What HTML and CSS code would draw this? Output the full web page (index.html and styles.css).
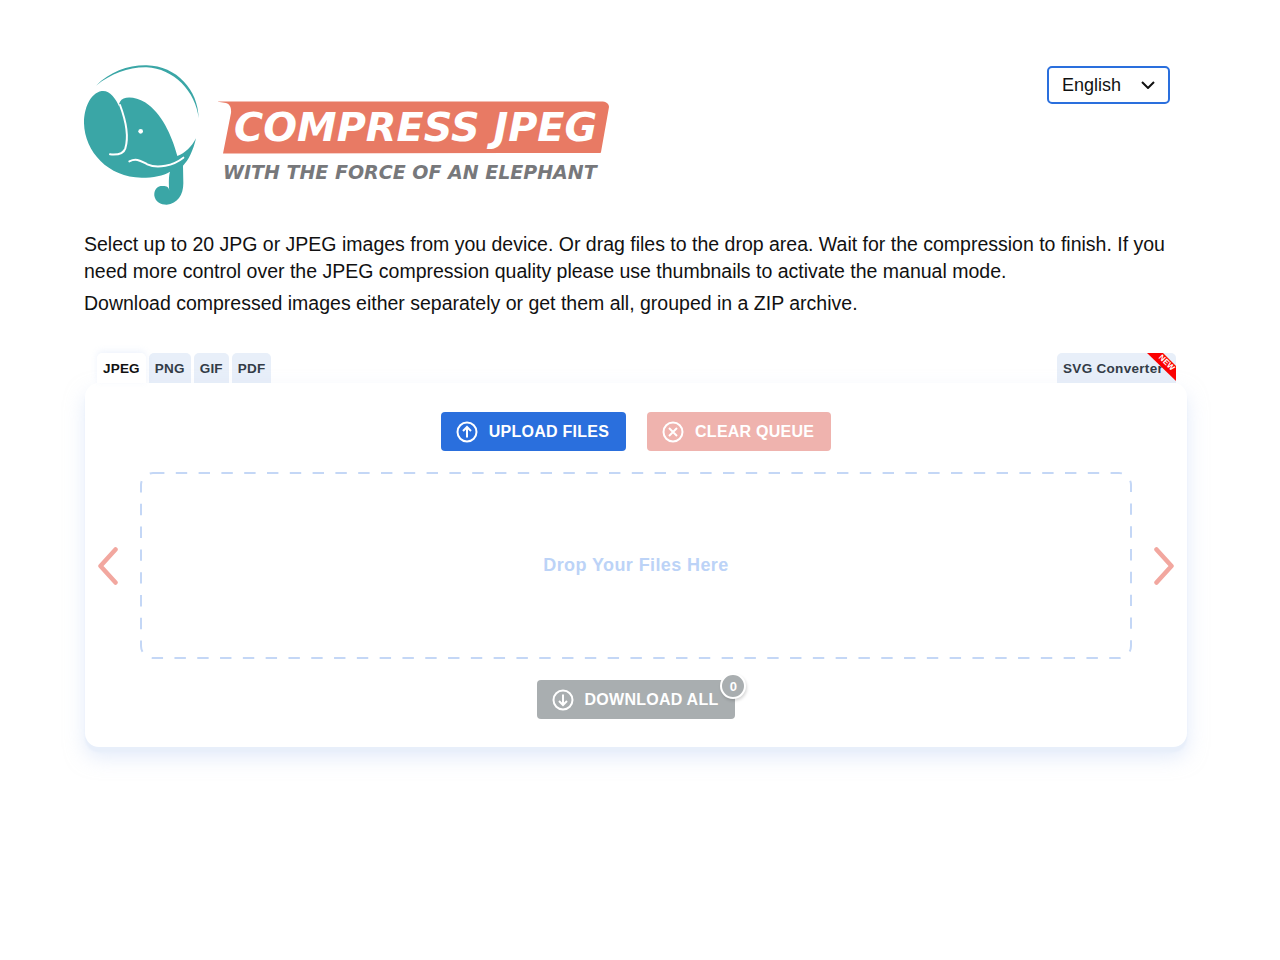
FILE: index.html
```html
<!DOCTYPE html>
<html lang="en">
<head>
    <meta charset="UTF-8">
    <meta name="viewport" content="width=device-width, initial-scale=1.0">
    <title>Compress JPEG</title>
    <link rel="stylesheet" href="styles.css">
</head>
<body>

<main class="page">
    <header class="top">
        <a class="logo" href="#">
            <!-- elephant -->
            <svg class="logo-mark" viewBox="42 30 351 420" width="117" height="140">
                <path class="teal-ring" d="M78 92 C120 50 175 30 230 31 C320 33 385 105 386 190 C378 110 310 40 230 37 C175 36 125 55 78 92 Z"/>
                <path class="teal" d="M95 108 C60 115 42 160 42 205 C44 290 115 368 215 368 C250 368 280 362 300 350 C296 362 296 385 298 410 C298 392 285 392 272 393 C258 396 252 408 253 422 C256 440 272 449 290 449 C322 447 340 420 340 385 L339 332 C356 316 370 285 378 250 C365 275 345 295 322 303 C305 240 275 175 225 142 C195 124 160 122 150 140 C145 148 147 155 150 160 C135 125 118 105 95 108 Z"/>
                <path class="cut" d="M150 150 C165 190 178 240 166 280 C160 298 140 300 120 298"/>
                <path class="cut" d="M178 319 C200 308 212 318 232 328 C262 342 310 332 340 308"/>
                <circle class="eye" cx="212" cy="229" r="7"/>
            </svg>
            <svg class="logo-name" viewBox="218 65 392 140" width="392" height="140">
                <path class="coral" d="M217 101.5 L601 101.5 C606 101.5 609 103.5 609 107 L601 152 C601 153 600 153 599 153 L223 153.5 L231 113 C231.5 108 230 104 226 103 Z"/>
                <text class="logo-title" x="234" y="141">COMPRESS JPEG</text>
                <text class="logo-sub" x="223" y="179">WITH THE FORCE OF AN ELEPHANT</text>
            </svg>
        </a>
        <div class="lang">
            <span>English</span>
            <svg class="lang-arrow" viewBox="0 0 14 8" width="14" height="8"><path d="M1 1 L7 7 L13 1"/></svg>
        </div>
    </header>

    <section class="intro">
        <p>Select up to 20 JPG or JPEG images from you device. Or drag files to the drop area. Wait for the compression to finish. If you need more control over the JPEG compression quality please use thumbnails to activate the manual mode.</p>
        <p>Download compressed images either separately or get them all, grouped in a ZIP archive.</p>
    </section>

    <nav class="tabs">
        <a class="tab active" href="#">JPEG</a>
        <a class="tab" href="#">PNG</a>
        <a class="tab" href="#">GIF</a>
        <a class="tab" href="#">PDF</a>
        <a class="tab tab-svg" href="#">
            SVG Converter
            <span class="ribbon"><span class="ribbon-text">NEW</span></span>
        </a>
    </nav>

    <section class="card">
        <div class="actions">
            <button class="btn btn-upload" type="button">
                <svg class="btn-icon" viewBox="0 0 22 22" width="22" height="22"><circle cx="11" cy="11" r="9.5"/><path d="M11 16.5 V6.5 M7 10 L11 6 L15 10"/></svg>
                UPLOAD FILES
            </button>
            <button class="btn btn-clear" type="button">
                <svg class="btn-icon" viewBox="0 0 22 22" width="22" height="22"><circle cx="11" cy="11" r="9.5"/><path d="M7 7 L15 15 M15 7 L7 15"/></svg>
                CLEAR QUEUE
            </button>
        </div>

        <div class="queue">
            <a class="arrow" href="#"><svg viewBox="0 0 20 38" width="20" height="38"><path d="M17.5 2.5 L2.5 19 L17.5 35.5"/></svg></a>
            <div class="drop">
                <svg class="drop-border" viewBox="0 0 992 187" width="992" height="187"><rect x="1" y="1" width="990" height="185" rx="12"/></svg>
                Drop Your Files Here
            </div>
            <a class="arrow" href="#"><svg viewBox="0 0 20 38" width="20" height="38"><path d="M2.5 2.5 L17.5 19 L2.5 35.5"/></svg></a>
        </div>

        <div class="actions">
            <button class="btn btn-download" type="button">
                <svg class="btn-icon" viewBox="0 0 22 22" width="22" height="22"><circle cx="11" cy="11" r="9.5"/><path d="M11 5.5 V15.5 M7 12 L11 16 L15 12"/></svg>
                DOWNLOAD ALL
                <span class="badge">0</span>
            </button>
        </div>
    </section>
</main>

</body>
</html>
```

FILE: styles.css
```css
body {
    font-family: 'Liberation Sans', Arial, sans-serif;
    margin: 0;
    padding: 0;
    background: #ffffff;
    color: #111111;
}

.page {
    width: 1103px;
    margin-left: 84px;
    padding-top: 65px;
    padding-bottom: 120px;
}

.top {
    display: flex;
    justify-content: space-between;
    align-items: flex-start;
    padding-right: 17px;
}

.logo {
    display: flex;
    gap: 17px;
    text-decoration: none;
}

.teal { fill: #3aa6a6; }
.teal-ring { fill: #3aa6a6; }
.coral { fill: #e87a64; }
.eye { fill: #ffffff; }

.cut {
    fill: none;
    stroke: #ffffff;
    stroke-width: 6;
    stroke-linecap: round;
}

.logo-title {
    font-family: 'DejaVu Sans', sans-serif;
    font-size: 39.8px;
    font-weight: bold;
    font-style: italic;
    fill: #ffffff;
}

.logo-sub {
    font-family: 'DejaVu Sans', sans-serif;
    font-size: 19px;
    font-weight: bold;
    font-style: italic;
    fill: #77787b;
}

.lang {
    display: flex;
    align-items: center;
    justify-content: space-between;
    box-sizing: border-box;
    width: 123px;
    height: 38px;
    margin-top: 1px;
    padding: 0 13px;
    border: 2px solid #2a6fdd;
    border-radius: 5px;
    font-size: 18px;
}

.lang-arrow path {
    fill: none;
    stroke: #111111;
    stroke-width: 2;
}

.intro {
    width: 1086px;
    margin-top: 26px;
    font-size: 19.5px;
    line-height: 27px;
}

.intro p {
    margin: 0 0 5px 0;
}

.tabs {
    display: flex;
    gap: 3px;
    margin-top: 36px;
    padding-left: 13px;
    padding-right: 11px;
    height: 30px;
}

.tab {
    position: relative;
    display: flex;
    align-items: center;
    padding: 0 6px;
    height: 30px;
    background: #e8eff9;
    border-radius: 5px 5px 0 0;
    color: #333c47;
    font-size: 13.5px;
    font-weight: bold;
    letter-spacing: 0.2px;
    text-decoration: none;
}

.tab.active {
    background: #ffffff;
    color: #111111;
    box-shadow: 0 -2px 6px rgba(200, 215, 245, 0.3);
    z-index: 1;
}

.tab-svg {
    margin-left: auto;
    overflow: hidden;
    padding-right: 13px;
    letter-spacing: 0.3px;
}

.ribbon {
    position: absolute;
    top: 0;
    right: 0;
    width: 29px;
    height: 28px;
    background: #fb0000;
    clip-path: polygon(0 0, 16px 0, 29px 13px, 29px 28px);
}

.ribbon-text {
    position: absolute;
    top: 6px;
    left: 10px;
    color: #ffffff;
    font-size: 8px;
    letter-spacing: 0;
    line-height: 8px;
    transform: rotate(45deg);
}

.card {
    position: relative;
    box-sizing: border-box;
    width: 1102px;
    height: 364px;
    margin-left: 1px;
    padding-top: 29px;
    background: #ffffff;
    border-radius: 14px;
    box-shadow: 0 5px 2px #e8effa, 0 10px 20px rgba(200, 215, 245, 0.5);
}

.actions {
    display: flex;
    justify-content: center;
    gap: 21px;
}

.btn {
    position: relative;
    display: flex;
    align-items: center;
    gap: 11px;
    height: 39px;
    padding: 0 17px 0 15px;
    border: none;
    border-radius: 4px;
    color: #ffffff;
    font-family: inherit;
    font-size: 16px;
    font-weight: bold;
    letter-spacing: 0.25px;
    cursor: pointer;
}

.btn-upload { background: #2a6fdd; }
.btn-clear { background: #efb3ae; }
.btn-download { background: #a9aeb0; }

.btn-icon circle,
.btn-icon path {
    fill: none;
    stroke: #ffffff;
    stroke-width: 2;
}

.queue {
    display: flex;
    justify-content: space-between;
    align-items: center;
    margin: 21px 0;
    padding: 0 13px;
}

.arrow {
    display: flex;
    width: 20px;
}

.arrow path {
    fill: none;
    stroke: #f2a79f;
    stroke-width: 4.5;
    stroke-linecap: round;
    stroke-linejoin: round;
}

.drop {
    position: relative;
    display: flex;
    align-items: center;
    justify-content: center;
    width: 992px;
    height: 187px;
    color: #bcd3f7;
    font-size: 18px;
    font-weight: bold;
    letter-spacing: 0.4px;
}

.drop-border {
    position: absolute;
    top: 0;
    left: 0;
}

.drop-border rect {
    fill: none;
    stroke: #c4d7f6;
    stroke-width: 2;
    stroke-dasharray: 11.4 11.4;
}

.badge {
    position: absolute;
    top: -7px;
    right: -11px;
    display: flex;
    align-items: center;
    justify-content: center;
    box-sizing: border-box;
    width: 26px;
    height: 26px;
    border: 2px solid #ffffff;
    border-radius: 50%;
    background: #a9aeb0;
    box-shadow: 1px 2px 3px rgba(0, 0, 0, 0.15);
    font-size: 13px;
    letter-spacing: 0;
}
```
